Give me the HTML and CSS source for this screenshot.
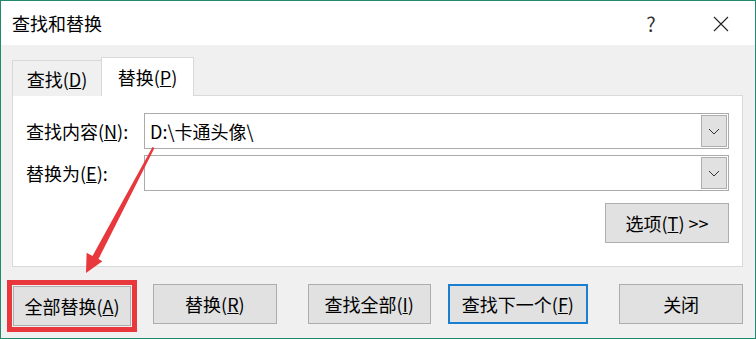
FILE: index.html
```html
<!DOCTYPE html>
<html lang="zh-CN">
<head>
  <meta charset="UTF-8">
  <title>查找和替换</title>
  <link rel="stylesheet" href="styles.css">
</head>
<body>

<div class="window">
  <div class="titlebar">
    <span class="title">查找和替换</span>
    <span class="help">?</span>
    <span class="close">
      <svg width="16" height="16" viewBox="0 0 16 16"><path d="M1 1 L15 15 M15 1 L1 15" stroke="#222" stroke-width="1.1" fill="none"/></svg>
    </span>
  </div>

  <div class="body">
    <div class="tabs">
      <div class="tab">查找(<u>D</u>)</div>
      <div class="tab active">替换(<u>P</u>)</div>
    </div>

    <div class="panel">
      <div class="row">
        <label class="label">查找内容(<u>N</u>):</label>
        <div class="combo">
          <span class="combo-text">D:\卡通头像\</span>
          <span class="drop">
            <svg width="12" height="7" viewBox="0 0 12 7"><path d="M1 1 L6 6 L11 1" stroke="#333" stroke-width="1" fill="none"/></svg>
          </span>
        </div>
      </div>
      <div class="row">
        <label class="label">替换为(<u>E</u>):</label>
        <div class="combo">
          <span class="combo-text"></span>
          <span class="drop">
            <svg width="12" height="7" viewBox="0 0 12 7"><path d="M1 1 L6 6 L11 1" stroke="#333" stroke-width="1" fill="none"/></svg>
          </span>
        </div>
      </div>
      <div class="options-row">
        <button class="btn">选项(<u>T</u>) &gt;&gt;</button>
      </div>
    </div>

    <div class="actions">
      <div class="highlight">
        <button class="btn btn-all">全部替换(<u>A</u>)</button>
      </div>
      <button class="btn btn-replace">替换(<u>R</u>)</button>
      <button class="btn btn-findall">查找全部(<u>I</u>)</button>
      <button class="btn btn-next">查找下一个(<u>F</u>)</button>
      <button class="btn btn-close">关闭</button>
    </div>
  </div>

  <!-- annotation arrow -->
  <svg class="arrow" width="756" height="339" viewBox="0 0 756 339">
    <polygon points="152.5,147 154.5,148 98.5,259 102.4,261.3 86,273 86.6,252.7 92.5,256" fill="#e8383d"/>
  </svg>
</div>

</body>
</html>
```

FILE: styles.css
```css
body {
  margin: 0;
  font-family: "Noto Sans CJK SC", "Liberation Sans", sans-serif;
}
.window {
  position: relative;
  width: 756px;
  height: 339px;
  box-sizing: border-box;
  border: 1px solid #218a6c;
  background: #f0f0f0;
  overflow: hidden;
}
.titlebar {
  height: 44px;
  background: #fff;
  display: flex;
  align-items: center;
  padding-left: 11px;
}
.title {
  font-size: 18px;
  color: #000;
}
.help {
  margin-left: auto;
  width: 20px;
  text-align: center;
  font-size: 20px;
  color: #333;
  margin-right: 52px;
}
.close {
  width: 16px;
  height: 16px;
  margin-right: 26px;
  margin-top: 1px;
}
.close svg {
  display: block;
}

.body {
  padding: 0 12px 0 11px;
}
.tabs {
  display: flex;
  align-items: flex-end;
  height: 39px;
  margin-top: 12px;
  margin-bottom: -1px;
  position: relative;
  z-index: 1;
}
.tab {
  height: 36px;
  box-sizing: border-box;
  width: 89px;
  border: 1px solid #d9d9d9;
  border-bottom: none;
  border-right: none;
  display: flex;
  align-items: center;
  justify-content: center;
  font-size: 18px;
  background: #f0f0f0;
}
.tab.active {
  height: 39px;
  width: 93px;
  background: #fff;
  border-right: 1px solid #d9d9d9;
}

.panel {
  height: 172px;
  box-sizing: border-box;
  background: #fff;
  border: 1px solid #d9d9d9;
  padding: 17px 13px 0 13px;
}
.row {
  display: flex;
  align-items: center;
  height: 36px;
  margin-bottom: 6px;
}
.label {
  width: 118px;
  font-size: 18px;
}
.combo {
  flex: 1;
  height: 36px;
  box-sizing: border-box;
  border: 1px solid #ababab;
  display: flex;
  align-items: center;
  padding: 0 1px 0 5px;
}
.combo-text {
  flex: 1;
  font-size: 18px;
}
.drop {
  width: 26px;
  height: 32px;
  box-sizing: border-box;
  background: #e1e1e1;
  border: 1px solid #adadad;
  display: flex;
  align-items: center;
  justify-content: center;
}
.drop svg {
  display: block;
}
.options-row {
  display: flex;
  justify-content: flex-end;
  margin-top: 12px;
}

.btn {
  height: 40px;
  width: 124px;
  box-sizing: border-box;
  background: #e1e1e1;
  border: 1px solid #adadad;
  font-family: inherit;
  font-size: 18px;
  color: #000;
  padding: 0;
}
.actions {
  display: flex;
  align-items: flex-start;
  margin-top: 17px;
  margin-left: -5px;
}
.highlight {
  border: 5px solid #e8383d;
  padding: 1px;
  margin-top: -4px;
}
.btn-all {
  width: 118px;
  display: block;
}
.btn-replace {
  margin-left: 16px;
}
.btn-findall {
  margin-left: 31px;
  width: 123px;
}
.btn-next {
  margin-left: 17px;
  width: 141px;
  border: 2px solid #1a7fd0;
}
.btn-close {
  margin-left: 31px;
}

.arrow {
  position: absolute;
  left: -1px;
  top: -1px;
  pointer-events: none;
}
```
